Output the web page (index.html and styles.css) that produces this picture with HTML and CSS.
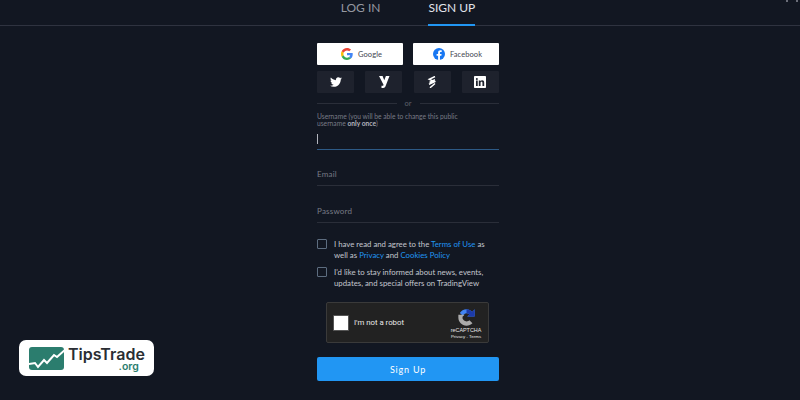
FILE: index.html
```html
<!DOCTYPE html>
<html lang="en">
<head>
<meta charset="utf-8">
<title>Sign up</title>
<link rel="stylesheet" href="styles.css">
</head>
<body>
<header class="tabs">
  <a class="tab">LOG IN</a>
  <a class="tab tab-active">SIGN UP</a>
  <span class="corner-dots"><i></i><i></i></span>
</header>
<main class="form">
  <div class="row-wide">
    <button class="btn-white">
      <svg class="ico13" viewBox="0 0 48 48"><path fill="#EA4335" d="M24 9.500c3.500 0 6.700 1.200 9.200 3.600l6.900-6.900C35.900 2.400 30.400 0 24 0 14.600 0 6.500 5.400 2.600 13.200l8 6.200C12.500 13.700 17.800 9.500 24 9.500z"/><path fill="#4285F4" d="M46.900 24.500c0-1.600-.1-3.100-.4-4.500H24v9h12.900c-.6 3-2.200 5.500-4.800 7.200l7.700 6c4.500-4.200 7.100-10.300 7.100-17.700z"/><path fill="#FBBC05" d="M10.500 28.600c-.5-1.500-.8-3-.8-4.600s.3-3.100.8-4.600l-8-6.200C.9 16.500 0 20.100 0 24s.9 7.500 2.600 10.800l7.900-6.200z"/><path fill="#34A853" d="M24 48c6.500 0 11.900-2.100 15.900-5.800l-7.700-6c-2.200 1.400-4.900 2.300-8.200 2.300-6.200 0-11.500-4.200-13.400-9.900l-8 6.200C6.500 42.600 14.600 48 24 48z"/></svg>
      <span>Google</span>
    </button>
    <button class="btn-white">
      <svg class="ico13" viewBox="0 0 24 24"><circle cx="12" cy="12" r="12" fill="#1877F2"/><path fill="#fff" d="M16.700 15.500l.5-3.500h-3.300V9.800c0-1 .5-1.900 2-1.900h1.500V4.900s-1.400-.2-2.700-.2c-2.700 0-4.500 1.700-4.500 4.600V12h-3v3.500h3V24h3.700v-8.500z"/></svg>
      <span>Facebook</span>
    </button>
  </div>
  <div class="row-small">
    <button class="btn-dark"><svg class="ico12" viewBox="0 0 24 24"><path fill="#fff" d="M23.900 4.600c-.9.400-1.800.7-2.800.8 1-.6 1.800-1.600 2.200-2.700-1 .6-2 1-3.100 1.200-.9-1-2.200-1.600-3.600-1.600-3.200 0-5.500 3-4.800 6C7.700 8.100 4.100 6.100 1.700 3.100.4 5.300 1 8.200 3.200 9.700c-.8 0-1.600-.2-2.200-.6-.1 2.300 1.600 4.400 3.900 4.900-.7.200-1.500.2-2.200.1.600 2 2.400 3.400 4.600 3.400-2.100 1.600-4.700 2.300-7.300 2 2.200 1.400 4.800 2.200 7.500 2.200 9.100 0 14.300-7.700 14-14.600 1-.7 1.800-1.500 2.400-2.500z"/></svg></button>
    <button class="btn-dark"><svg class="ico12" viewBox="0 0 24 24"><path fill="#fff" d="M2 0h7.200l3.300 8.500L15.800 0H23l-8 20.500c-.9 2.100-2.300 3.500-4.500 3.500H7v-4.600h2c1 0 1.500-.4 1.800-1.100l.2-.6z"/></svg></button>
    <button class="btn-dark"><svg class="ico12" viewBox="0 0 24 24"><path fill="none" stroke="#fff" stroke-width="3" d="M18 1 6.500 6.500 17 11.500 6 16.500M18 7.500 7 13M18 15 8 23.500"/></svg></button>
    <button class="btn-dark"><svg class="ico12" viewBox="0 0 24 24"><rect width="24" height="24" rx="1.500" fill="#fff"/><path fill="#1e222d" d="M4 9h3.500v11H4zM5.700 3.800a2 2 0 1 1 0 4 2 2 0 0 1 0-4zM9.600 9H13v1.500c.6-1 1.800-1.800 3.500-1.800 3.300 0 3.900 2.200 3.900 5V20h-3.500v-5.600c0-1.300-.2-2.700-1.800-2.700s-2 1.200-2 2.600V20H9.600z"/></svg></button>
  </div>
  <div class="divider"><span>or</span></div>
  <div class="field field-focus">
    <label class="hint">Username (you will be able to change this public username <b>only once</b>)</label>
    <span class="caret"></span>
  </div>
  <div class="field field-email"><label class="placeholder">Email</label></div>
  <div class="field"><label class="placeholder">Password</label></div>
  <div class="check check-first">
    <span class="box"></span>
    <p>I have read and agree to the <a>Terms of Use</a> as well as <a>Privacy</a> and <a>Cookies Policy</a></p>
  </div>
  <div class="check">
    <span class="box"></span>
    <p>I'd like to stay informed about news, events, updates, and special offers on TradingView</p>
  </div>
  <div class="captcha">
    <span class="captcha-box"></span>
    <span class="captcha-text">I'm not a robot</span>
    <div class="captcha-brand">
      <svg class="captcha-logo" viewBox="0 0 24 24">
        <path fill="#4285f4" d="M12 .5C8 .5 4.500 2.700 2.600 5.800L7 9.500C8 7.300 9.900 6 12 6c1.600 0 3 .6 4 1.700l-3 3h10.500V.5l-3.600 3.600C17.800 1.800 15.100.5 12 .5z"/>
        <path fill="#1c3aa9" d="M12 .5V6c1.600 0 3 .6 4 1.700l-3 3h10.500V.5l-3.600 3.600C17.800 1.800 15.100.5 12 .5z"/>
        <path fill="#ababab" d="M.5 12c0 6.300 5.100 11.500 11.500 11.500 3.200 0 6.300-1.200 8.400-3.400l-4.200-4.300c-1 1-2.500 1.700-4.200 1.700-2.600 0-4.700-1.800-5.600-4V11l2.900-2.900H.5z"/>
      </svg>
      <span class="captcha-name">reCAPTCHA</span>
      <span class="captcha-links">Privacy - Terms</span>
    </div>
  </div>
  <button class="submit">Sign Up</button>
</main>
<aside class="brand">
  <svg class="brand-mark" viewBox="0 0 37 25"><path fill="#2b7d6e" d="M3 1h29q3 0 3 3v17q0 3-3 3H3q-3 0-3-3V4q0-3 3-3z"/><path fill="none" stroke="#fff" stroke-width="2" d="M0 18l6-1 3 4 6-7 3 3 7-8 3 2 9-8"/></svg>
  <div class="brand-text">
    <span class="brand-name">TipsTrade</span>
    <span class="brand-org">.org</span>
  </div>
</aside>
</body>
</html>
```
FILE: styles.css
```css
* { box-sizing: border-box; }
html, body { margin: 0; height: 400px; overflow: hidden; }
body {
  background: #121722;
  color: #b2b5be;
  font-family: Lato, sans-serif;
  position: relative;
}
.tabs {
  height: 26px;
  border-bottom: 1px solid #2f3340;
  display: flex;
  justify-content: center;
  gap: 48px;
  padding-left: 16px;
  margin-bottom: 17px;
}
.tab {
  height: 26px;
  font-size: 12px;
  line-height: 15px;
  color: #9598a1;
}
.tab-active { color: #e1e3eb; border-bottom: 2px solid #2196f3; }
.corner-dots { position: absolute; right: 2px; top: 0; display: flex; gap: 8px; }
.corner-dots i { width: 2px; height: 2px; background: #6a6d78; }
.form { width: 182px; margin-left: 317px; display: flex; flex-direction: column; }
.row-wide { display: flex; justify-content: space-between; }
.btn-white {
  width: 86px;
  height: 22px;
  background: #fff;
  border: 0;
  border-radius: 1px;
  display: flex;
  align-items: center;
  justify-content: center;
  gap: 5px;
  padding: 0 0 0 3px;
  font: 7.500px Lato, sans-serif;
  letter-spacing: .1px;
  color: #434651;
}
.ico13 { width: 12px; height: 12px; }
.row-small { display: flex; justify-content: space-between; margin-top: 6px; }
.btn-dark {
  width: 37px;
  height: 22px;
  background: #1e222d;
  border: 0;
  border-radius: 1px;
  display: flex;
  align-items: center;
  justify-content: center;
  padding: 0;
}
.ico12 { width: 12px; height: 12px; }
.divider {
  display: flex;
  align-items: center;
  gap: 8px;
  height: 10px;
  margin-top: 5px;
  font-size: 7.500px;
  color: #5d606b;
}
.divider::before, .divider::after { content: ""; flex: 1; height: 1px; background: #2a2e39; }
.field { height: 37px; border-bottom: 1px solid #2a2e39; display: flex; flex-direction: column; justify-content: flex-end; padding-bottom: 6px; }
.field-focus { height: 42px; border-bottom-color: #2d5a86; padding-bottom: 5px; }
.field-email { height: 36px; }
.hint { font-size: 6.700px; line-height: 7px; color: #787b86; margin-bottom: 7px; width: 150px; }
.hint b { font-weight: 700; color: #b2b5be; }
.caret { width: 1px; height: 10px; background: #b2b5be; }
.placeholder { font-size: 8px; line-height: 10px; letter-spacing: .2px; color: #787b86; }
.check { display: flex; gap: 7px; margin-top: 6px; }
.check-first { margin-top: 16px; }
.box { width: 10px; height: 10px; flex: none; border: 1.500px solid #5d6d80; border-radius: 1px; }
.check p { margin: 0; font-size: 7.800px; line-height: 11px; color: #c3c6ce; width: 165px; }
.check a { color: #2196f3; }
.captcha {
  width: 163px;
  height: 41px;
  margin: 13px 0 0 9px;
  background: #222;
  border: 1px solid #3a3a3a;
  border-radius: 2px;
  display: flex;
  align-items: center;
  padding-left: 6px;
}
.captcha-box { width: 16px; height: 16px; background: #fff; border: 1px solid #555; border-radius: 1px; }
.captcha-text { font: 7.800px Roboto, sans-serif; color: #e8e8e8; margin-left: 5px; flex: 1; }
.captcha-brand { width: 44px; display: flex; flex-direction: column; align-items: center; color: #e8e8e8; margin-top: 2px; }
.captcha-logo { width: 17px; height: 17px; }
.captcha-name { font: 5.400px/6px "Liberation Sans", sans-serif; margin-top: 1px; }
.captcha-links { font: 4.400px/5px "Liberation Sans", sans-serif; margin-top: 1px; }
.submit {
  height: 24px;
  margin-top: 14px;
  background: #2196f3;
  border: 0;
  border-radius: 2px;
  color: #fff;
  font: 9px Lato, sans-serif;
  letter-spacing: .8px;
}
.brand {
  position: absolute;
  left: 19px;
  top: 340px;
  width: 135px;
  height: 36px;
  background: #fff;
  border-radius: 7px;
  display: flex;
  align-items: center;
  padding-left: 10px;
  gap: 2px;
}
.brand-mark { width: 37px; height: 25px; }
.brand-text { display: flex; flex-direction: column; font-family: Inter, sans-serif; font-weight: 600; margin-top: 2px; }
.brand-name { font-size: 16px; line-height: 15px; color: #2a2e33; }
.brand-org { font-size: 10.500px; line-height: 9px; color: #2b7d6e; text-align: right; margin-right: 6px; }
```
